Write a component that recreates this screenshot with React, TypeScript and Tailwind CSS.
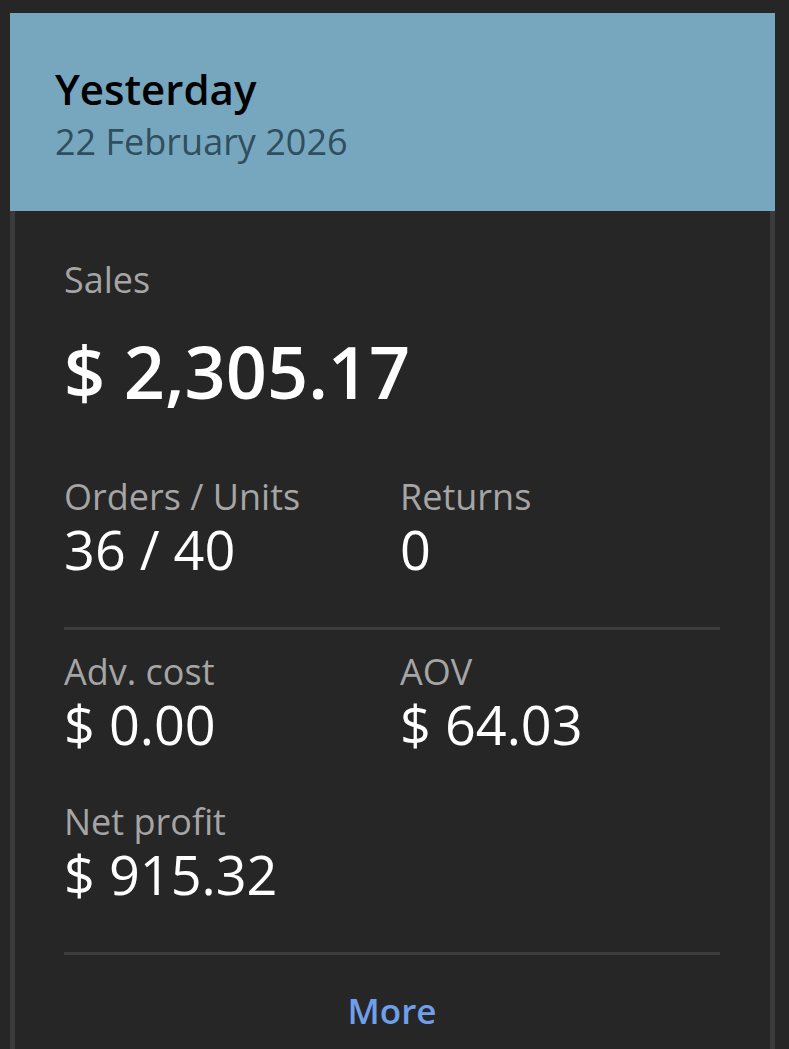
import React from "react";

function Stat({ label, value }: { label: string; value: string }) {
  return (
    <div className="flex flex-col">
      <div className="text-[36px] leading-[44px] text-[#a5a5a5]">{label}</div>
      <div className="text-[54px] leading-[60px] text-white">{value}</div>
    </div>
  );
}

export default function App() {
  return (
    <div
      className="min-h-[1049px] w-full bg-[#262626] pt-[13px] px-[10px] pr-[14px] overflow-hidden"
      style={{ fontFamily: '"Open Sans", "Noto Sans", sans-serif' }}
    >
      <div className="flex flex-col">
        <div className="bg-[#76a7bf] pt-[51px] pb-[41px] pl-[45px]">
          <div className="text-[42px] leading-[50px] font-semibold text-black">Yesterday</div>
          <div className="text-[36px] leading-[56px] text-[#2f4e5e]">22 February 2026</div>
        </div>
        <div className="border-x-[5px] border-[#3b3b3b] bg-[#262626] pl-[49px] pr-[50px] pt-[47px] pb-[40px]">
          <div className="text-[36px] leading-[44px] text-[#a5a5a5]">Sales</div>
          <div className="mt-[20px] text-[72px] leading-[98px] font-semibold text-white">$ 2,305.17</div>
          <div className="mt-[55px] grid grid-cols-[336px_1fr]">
            <Stat label="Orders / Units" value="36 / 40" />
            <Stat label="Returns" value="0" />
          </div>
          <div className="mt-[48px] border-t-[3px] border-[#3b3b3b]" />
          <div className="mt-[20px] grid grid-cols-[336px_1fr] gap-y-[46px]">
            <Stat label="Adv. cost" value="$ 0.00" />
            <Stat label="AOV" value="$ 64.03" />
            <Stat label="Net profit" value="$ 915.32" />
          </div>
          <div className="mt-[48px] border-t-[3px] border-[#3b3b3b]" />
          <div className="mt-[34px] text-center text-[35px] leading-[44px] font-semibold text-[#6f9eea]">
            More
          </div>
        </div>
      </div>
    </div>
  );
}
